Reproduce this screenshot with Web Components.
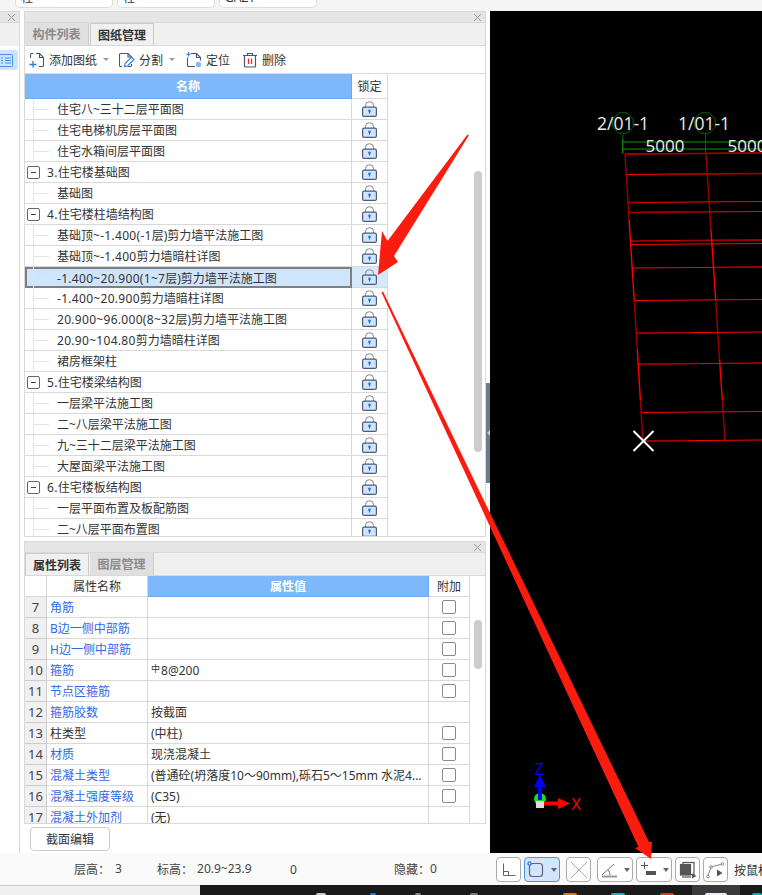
<!DOCTYPE html>
<html lang="zh">
<head>
<meta charset="utf-8">
<title>图纸管理</title>
<style>
  html, body { margin: 0; padding: 0; background: #fff; }
  body { font: 12px "Noto Sans", "Noto Sans CJK SC", sans-serif; color: #333; }
</style>
</head>
<body>
<app-shell>
  <top-strip slot="top"></top-strip>
  <side-strip slot="side"></side-strip>

  <dock-panel slot="sheets" tabs="构件列表,图纸管理" active="1">
    <sheet-toolbar>
      <tool-btn label="添加图纸" caret>
        <svg width="16" height="16" viewBox="0 0 16 16" fill="none" stroke="#4b5568" stroke-width="1.1">
          <path d="M1.5 6V2.500a1 1 0 0 1 1-1h2M7 1.500h3.500l4 4v8a1 1 0 0 1-1 1H10M14.500 9v2"/>
          <path d="M10.500 1.500v4h4"/>
          <path d="M4 9v6.500M.5 12.500h7" stroke="#2c7be5" stroke-width="1.300"/>
        </svg>
      </tool-btn>
      <tool-btn label="分割" caret gap="10">
        <svg width="16" height="16" viewBox="0 0 16 16" fill="none" stroke="#4b5568" stroke-width="1.1">
          <path d="M3 14.500H1.500a1 1 0 0 1-1-1V2.500a1 1 0 0 1 1-1H9l3.500 3.500v1.500M12.500 12v1.500a1 1 0 0 1-1 1H9"/>
          <path d="M9 1.500V5h3.500"/>
          <path d="M5.500 14.500l.6-3L12.500 5l2.500 2.500-6.500 6.500z" fill="#fff" stroke="#2c7be5"/>
        </svg>
      </tool-btn>
      <tool-btn label="定位" gap="11">
        <svg width="16" height="16" viewBox="0 0 16 16" fill="none" stroke="#4b5568" stroke-width="1.1">
          <path d="M5 1.500h5.500l4 4v3M10.500 1.500v4h4M1.500 5.500v8a1 1 0 0 0 1 1H9"/>
          <path d="M2.500 0v4.500M.3 2.200h4.500" stroke="#2c7be5"/>
          <rect x="10" y="10" width="5" height="5" rx="1.500" fill="#8db8ee" stroke="none"/>
        </svg>
      </tool-btn>
      <tool-btn label="删除" gap="12">
        <svg width="16" height="16" viewBox="0 0 16 16" fill="none" stroke="#4b5568" stroke-width="1.2">
          <path d="M1 3.500h14M5.500 3.500V1.500h5v2"/>
          <path d="M2.500 3.500v10.500a1 1 0 0 0 1 1h9a1 1 0 0 0 1-1V3.500"/>
          <path d="M6.500 6.500v5.500M9.500 6.500v5.500" stroke="#e02b2b" stroke-width="1.300"/>
        </svg>
      </tool-btn>
    </sheet-toolbar>
    <drawing-list></drawing-list>
  </dock-panel>

  <dock-panel slot="props" tabs="属性列表,图层管理" active="0">
    <prop-table></prop-table>
  </dock-panel>

  <edit-button slot="action">截面编辑</edit-button>

  <cad-canvas slot="canvas"></cad-canvas>

  <status-bar slot="status">
    <snap-btn>
      <svg width="23" height="23" viewBox="0 0 23 23" fill="none" stroke="#666">
        <path d="M6.500 5.500v12h12M6.500 13.500h5v4"/>
      </svg>
    </snap-btn>
    <snap-btn wide selected>
      <svg width="23" height="23" viewBox="0 0 23 23" fill="none" stroke="#5a6478" stroke-width="1.200">
        <rect x="4.500" y="5.500" width="13" height="13" rx="3"/>
        <circle cx="4.500" cy="5.500" r="1.600" fill="#d3e5fb" stroke="#2c7be5"/>
      </svg>
    </snap-btn>
    <snap-btn gap="3">
      <svg width="23" height="23" viewBox="0 0 23 23" fill="none" stroke="#aaa">
        <path d="M4 4l16 16M20 4L4 20"/>
      </svg>
    </snap-btn>
    <snap-btn wide gap="3">
      <svg width="23" height="23" viewBox="0 0 23 23" fill="none" stroke="#777">
        <path d="M4 17l12-11"/>
        <path d="M4 18.500h15" stroke="#999" stroke-width="2"/>
        <path d="M10 12q2 2 2 5"/>
      </svg>
    </snap-btn>
    <snap-btn wide>
      <svg width="23" height="23" viewBox="0 0 23 23" fill="none" stroke="#555">
        <path d="M7.500 4v7M4 7.500h7"/>
        <rect x="9" y="13" width="10" height="4" fill="#555" stroke="none"/>
      </svg>
    </snap-btn>
    <snap-btn>
      <svg width="23" height="23" viewBox="0 0 23 23" fill="none" stroke="#555" stroke-width="1.200">
        <rect x="7" y="4.500" width="11" height="12"/>
        <rect x="4.500" y="6.500" width="10" height="10.500" fill="#555"/>
        <path d="M6 19h9"/>
        <path d="M16 15.500l4.500 2.500-4.500 2.500z" fill="#555" stroke="none"/>
      </svg>
    </snap-btn>
    <snap-btn>
      <svg width="23" height="23" viewBox="0 0 23 23" fill="none" stroke="#888">
        <path d="M4 18l3-9 11-3"/>
        <circle cx="4" cy="18.500" r="1.300" fill="#fff"/>
        <circle cx="7" cy="9" r="1.300" fill="#fff"/>
        <circle cx="18.500" cy="6" r="1.300" fill="#fff"/>
        <path d="M13 11.500l5.500 3.500-5.500 3.500z" fill="#555" stroke="none"/>
      </svg>
    </snap-btn>
  </status-bar>

  <task-bar slot="task"></task-bar>
  <arrow-overlay slot="overlay"></arrow-overlay>
</app-shell>

<script>
const FONT = `"Noto Sans", "Noto Sans CJK SC", sans-serif`;
const LINE = "#d9d9d9";

// 数字部分稍微放宽一点，原图是 hinting 后的字宽
const spaced = (text) => text.replace(/[-0-9.~()]{2,}/g, (m) => `<span class="n">${m}</span>`);

class AppShell extends HTMLElement {
  constructor() {
    super();
    this.attachShadow({ mode: "open" });
    this.shadowRoot.innerHTML = `
      <style>
        :host { display: flex; flex-direction: column; position: relative; width: 762px; height: 895px; overflow: hidden; font: 12px ${FONT}; color: #333; background: #fff; }
        .middle { display: flex; height: 842px; }
        .docks { display: flex; flex-direction: column; width: 462px; margin-left: 4px; }
        .gap { height: 4px; flex: none; }
        .split { width: 4px; flex: none; display: flex; align-items: flex-start; }
        .handle { width: 4px; height: 100px; margin-top: 372px; background: #6c7a89; display: flex; align-items: center; justify-content: center; }
        .handle i { width: 0; height: 0; border: 3px solid transparent; border-right: 3px solid #c9c9c9; border-left: 0; }
        .canvas { flex: 1; min-width: 0; }
        ::slotted([slot="sheets"]) { height: 526px; flex: none; }
        ::slotted([slot="props"]) { height: 283px; flex: none; }
      </style>
      <slot name="top"></slot>
      <div class="middle">
        <slot name="side"></slot>
        <div class="docks">
          <slot name="sheets"></slot>
          <div class="gap"></div>
          <slot name="props"></slot>
          <slot name="action"></slot>
        </div>
        <div class="split"><div class="handle"><i></i></div></div>
        <div class="canvas"><slot name="canvas"></slot></div>
      </div>
      <slot name="status"></slot>
      <slot name="task"></slot>
      <slot name="overlay"></slot>
    `;
  }
}

class TopStrip extends HTMLElement {
  constructor() {
    super();
    this.attachShadow({ mode: "open" });
    this.shadowRoot.innerHTML = `
      <style>
        :host { display: flex; height: 11px; flex: none; background: #f5f5f5; padding-left: 15px; gap: 4px; box-sizing: border-box; }
        .box { width: 98px; height: 8px; background: #fff; border: 1px solid #ddd; border-top: 0; border-radius: 0 0 5px 5px; overflow: hidden; padding-left: 5px; box-sizing: border-box; }
        .box span { display: block; margin-top: -10px; line-height: 16px; color: #333; }
      </style>
      <div class="box"><span>柱</span></div>
      <div class="box"><span>柱</span></div>
      <div class="box"><span>GAZ1</span></div>
    `;
  }
}

class SideStrip extends HTMLElement {
  constructor() {
    super();
    this.attachShadow({ mode: "open" });
    this.shadowRoot.innerHTML = `
      <style>
        :host { display: block; width: 20px; flex: none; box-sizing: border-box; border-top: 1px solid ${LINE}; border-right: 1px solid ${LINE}; background: #fff; }
        .title { height: 10px; background: #e5e5e5; border-bottom: 1px solid ${LINE}; display: flex; justify-content: flex-end; align-items: center; padding-right: 4px; }
        .band { height: 23px; background: #f0f0f0; }
        .pick { width: 18px; height: 20px; margin-top: 4px; background: #cde3fb; border-radius: 0 3px 3px 0; display: flex; align-items: center; }
      </style>
      <div class="title">
        <svg width="7" height="7" viewBox="0 0 7 7" stroke="#999" fill="none"><path d="M0 0l7 7M7 0L0 7"/></svg>
      </div>
      <div class="band"></div>
      <div class="pick">
        <svg width="13" height="13" viewBox="0 0 13 13" fill="none" stroke="#4a90e8">
          <path d="M-1 .5h12.500a1 1 0 0 1 1 1v10a1 1 0 0 1-1 1H-1"/>
          <path d="M1 4h2M5 4h6M1 6.500h2M5 6.500h6M1 9h2M5 9h6"/>
        </svg>
      </div>
    `;
  }
}

class DockPanel extends HTMLElement {
  constructor() {
    super();
    this.attachShadow({ mode: "open" });
  }

  connectedCallback() {
    const names = (this.getAttribute("tabs") || "").split(",");
    const active = Number(this.getAttribute("active") || 0);
    this.shadowRoot.innerHTML = `
      <style>
        :host { display: flex; flex-direction: column; box-sizing: border-box; border: 1px solid ${LINE}; overflow: hidden; background: #fff; }
        .title { flex: none; height: 10px; background: #e5e5e5; border-bottom: 1px solid ${LINE}; display: flex; justify-content: flex-end; align-items: center; padding-right: 4px; }
        .tabs { flex: none; height: 22px; background: #f0f0f0; border-bottom: 1px solid ${LINE}; display: flex; gap: 1px; }
        .tab { width: 64px; box-sizing: border-box; display: flex; align-items: center; justify-content: center; font-weight: 700; color: #8a8a8a; background: #e0e0e0; border-right: 1px solid #ccc; }
        .tab.on { color: #333; background: #f0f0f0; border: 1px solid #ccc; border-bottom: 0; }
      </style>
      <div class="title">
        <svg width="7" height="7" viewBox="0 0 7 7" stroke="#999" fill="none"><path d="M0 0l7 7M7 0L0 7"/></svg>
      </div>
      <div class="tabs">
        ${names.map((name, i) => `<div class="tab ${i === active ? "on" : ""}">${name}</div>`).join("")}
      </div>
      <slot></slot>
    `;
  }
}

class SheetToolbar extends HTMLElement {
  constructor() {
    super();
    this.attachShadow({ mode: "open" });
    this.shadowRoot.innerHTML = `
      <style>
        :host { display: flex; flex: none; height: 27px; align-items: center; padding-left: 4px; border-bottom: 1px solid ${LINE}; background: #fff; }
      </style>
      <slot></slot>
    `;
  }
}

class ToolBtn extends HTMLElement {
  constructor() {
    super();
    this.attachShadow({ mode: "open" });
  }

  connectedCallback() {
    const label = this.getAttribute("label");
    const gap = this.getAttribute("gap") || 0;
    this.shadowRoot.innerHTML = `
      <style>
        :host { display: flex; align-items: center; gap: 4px; margin-left: ${gap}px; color: #333; }
        .caret { width: 0; height: 0; margin-left: 2px; border: 3px solid transparent; border-top: 3px solid #999; border-bottom: 0; }
        ::slotted(svg) { display: block; }
      </style>
      <slot></slot><span>${label}</span>
      ${this.hasAttribute("caret") ? `<i class="caret"></i>` : ""}
    `;
  }
}

class LockIcon extends HTMLElement {
  constructor() {
    super();
    this.attachShadow({ mode: "open" });
    this.shadowRoot.innerHTML = `
      <style>:host { display: block; width: 15px; height: 16px; } svg { display: block; }</style>
      <svg width="15" height="16" viewBox="0 0 15 16" fill="none">
        <path d="M3.500 6.500V4.500a4 3.800 0 0 1 8 0v2" stroke="#7b8494"/>
        <rect x=".6" y="6.100" width="13.800" height="9.300" rx="1.500" fill="#cfe4fd" stroke="#4f5b73" stroke-width="1.200"/>
        <path d="M7.500 10v2.500" stroke="#1a73e8" stroke-width="1.200"/>
        <circle cx="7.500" cy="9.800" r="1.300" fill="#1a73e8"/>
      </svg>
    `;
  }
}

class DrawingList extends HTMLElement {
  constructor() {
    super();
    this.attachShadow({ mode: "open" });
    this.rows = [
      ["住宅八~三十二层平面图"], ["住宅电梯机房层平面图"], ["住宅水箱间层平面图"],
      ["3.住宅楼基础图", "group"], ["基础图"],
      ["4.住宅楼柱墙结构图", "group"], ["基础顶~-1.400(-1层)剪力墙平法施工图"], ["基础顶~-1.400剪力墙暗柱详图"],
      ["-1.400~20.900(1~7层)剪力墙平法施工图", "selected"], ["-1.400~20.900剪力墙暗柱详图"],
      ["20.900~96.000(8~32层)剪力墙平法施工图"], ["20.90~104.80剪力墙暗柱详图"], ["裙房框架柱"],
      ["5.住宅楼梁结构图", "group"], ["一层梁平法施工图"], ["二~八层梁平法施工图"], ["九~三十二层梁平法施工图"], ["大屋面梁平法施工图"],
      ["6.住宅楼板结构图", "group"], ["一层平面布置及板配筋图"], ["二~八层平面布置图"],
    ];
  }

  connectedCallback() {
    this.shadowRoot.innerHTML = `
      <style>
        :host { display: flex; flex: 1; min-height: 0; overflow: hidden; background: #fff; }
        .table { width: 363px; flex: none; }
        .head, .row { display: grid; grid-template-columns: 327px 36px; }
        .head div { height: 24px; display: flex; align-items: center; justify-content: center; border-bottom: 1px solid ${LINE}; border-right: 1px solid ${LINE}; }
        .head .name { background: #7cb8fa; color: #fff; font-weight: 700; border-color: #6aa9ee; }
        .row > div { height: 20px; border-bottom: 1px solid ${LINE}; border-right: 1px solid ${LINE}; display: flex; align-items: center; white-space: nowrap; }
        .lock { justify-content: center; }
        .tree { align-self: stretch; width: 15px; margin-left: 8px; margin-right: 8px; border-left: 1px solid #e4e4e4; display: flex; align-items: center; margin-bottom: -1px; }
        .tree i { display: block; width: 15px; height: 1px; background: #e4e4e4; }
        .minus { width: 11px; height: 11px; margin: 0 7px 0 2px; border: 1px solid #666; border-radius: 2px; display: flex; align-items: center; justify-content: center; }
        .minus i { display: block; width: 5px; height: 1px; background: #444; }
        .row.selected .name { height: 21px; box-sizing: border-box; border: 0; background: #cfe5fd; box-shadow: inset 0 0 0 2px #7f7f7f; }
        .row.selected .lock { background: #d5e8fd; }
        .n { letter-spacing: .3px; }
        .track { flex: 1; display: flex; justify-content: flex-end; padding-right: 3px; }
        .thumb { width: 8px; height: 281px; margin-top: 97px; background: #ccc; border-radius: 4px; }
      </style>
      <div class="table">
        <div class="head"><div class="name">名称</div><div>锁定</div></div>
        ${this.rows.map(([text, kind]) => `
          <div class="row ${kind || ""}">
            <div class="name">
              ${kind === "group" ? `<span class="minus"><i></i></span>` : `<span class="tree"><i></i></span>`}
              <span>${spaced(text)}</span>
            </div>
            <div class="lock"><lock-icon></lock-icon></div>
          </div>`).join("")}
      </div>
      <div class="track"><div class="thumb"></div></div>
    `;
  }
}

class PropTable extends HTMLElement {
  constructor() {
    super();
    this.attachShadow({ mode: "open" });
    // [序号, 名称, 值, 名称蓝色, 有勾选框]
    this.rows = [
      [7, "角筋", "", 1, 1],
      [8, "B边一侧中部筋", "", 1, 1],
      [9, "H边一侧中部筋", "", 1, 1],
      [10, "箍筋", `<span class="steel">中</span>8@200`, 1, 1],
      [11, "节点区箍筋", "", 1, 1],
      [12, "箍筋胶数", "按截面", 1, 0],
      [13, "柱类型", "(中柱)", 0, 1],
      [14, "材质", "现浇混凝土", 1, 1],
      [15, "混凝土类型", "(普通砼(坍落度10～90mm),砾石5～15mm 水泥4...", 1, 1],
      [16, "混凝土强度等级", "(C35)", 1, 1],
      [17, "混凝土外加剂", "(无)", 1, 0],
    ];
  }

  connectedCallback() {
    this.shadowRoot.innerHTML = `
      <style>
        :host { display: flex; flex: 1; min-height: 0; overflow: hidden; background: #fff; }
        .table { width: 445px; flex: none; }
        .row { display: grid; grid-template-columns: 22px 101px 281px 41px; }
        .row > div { height: 20px; border-bottom: 1px solid ${LINE}; border-right: 1px solid ${LINE}; display: flex; align-items: center; white-space: nowrap; overflow: hidden; }
        .no { justify-content: center; background: #f0f0f0; font-size: 13px; color: #444; border-color: #ccc !important; }
        .label { padding-left: 3px; }
        .label.blue { color: #3068e8; }
        .val { padding-left: 3px; color: #333; }
        .steel { font-size: 9px; position: relative; top: -2px; margin-right: 1px; }
        .add { justify-content: center; }
        .head > div { justify-content: center; padding: 0; }
        .head .val { background: #7cb8fa; color: #fff; font-weight: 700; border-color: #6aa9ee; }
        .box { width: 12px; height: 12px; border: 1px solid #8a8a8a; border-radius: 2px; background: #fff; }
        .track { flex: 1; display: flex; justify-content: flex-end; padding-right: 3px; }
        .thumb { width: 8px; height: 49px; margin-top: 44px; background: #ccc; border-radius: 4px; }
      </style>
      <div class="table">
        <div class="row head">
          <div></div><div>属性名称</div><div class="val">属性值</div><div>附加</div>
        </div>
        ${this.rows.map(([no, label, value, blue, check]) => `
          <div class="row">
            <div class="no">${no}</div>
            <div class="label ${blue ? "blue" : ""}">${label}</div>
            <div class="val">${value}</div>
            <div class="add">${check ? `<span class="box"></span>` : ""}</div>
          </div>`).join("")}
      </div>
      <div class="track"><div class="thumb"></div></div>
    `;
  }
}

class EditButton extends HTMLElement {
  constructor() {
    super();
    this.attachShadow({ mode: "open" });
    this.shadowRoot.innerHTML = `
      <style>
        :host { display: flex; width: 80px; height: 24px; margin: 3px 0 0 6px; box-sizing: border-box; border: 1px solid #ccc; border-radius: 4px; align-items: center; justify-content: center; color: #333; background: #fff; }
      </style>
      <slot></slot>
    `;
  }
}

class CadCanvas extends HTMLElement {
  constructor() {
    super();
    this.attachShadow({ mode: "open" });
  }

  connectedCallback() {
    const left = (y) => 625 + ((y - 154) * 18) / 287;
    const right = (y) => 706 + ((y - 154) * 19) / 287;
    const BRIGHT = "#ff0000";
    const DARK = "#a00000";

    // [y, 深色起点, 深色终点]
    const rails = [
      [154, 625, 762], [174.5, 665, 762], [202.5, 626, 640], [212.5, 628, 680],
      [241, 680, 762], [244.5, 630, 632], [268, 712, 762], [300.5, 634, 636],
      [333, 640, 690], [364, 650, 700], [412.5, 640, 642], [441, 646, 690],
    ];
    const rail = ([y, d0, d1]) => {
      const x0 = left(y);
      const end = y - 1;
      const at = (x) => (y + ((x - x0) * (end - y)) / (762 - x0)).toFixed(1);
      return `<path d="M${x0.toFixed(1)} ${y}L762 ${end}" stroke="${BRIGHT}" stroke-width="1.200"/>
        <path d="M${Math.max(d0, x0).toFixed(1)} ${at(Math.max(d0, x0))}L${d1} ${at(d1)}" stroke="${DARK}" stroke-width="1.500"/>`;
    };
    const post = (fx, spans) => spans.map(([y0, y1, c]) =>
      `<path d="M${fx(y0).toFixed(1)} ${y0}L${fx(y1).toFixed(1)} ${y1}" stroke="${c}" stroke-width="1.400"/>`).join("");
    const hex = (cx, cy, r) => {
      const pts = [];
      for (let i = 0; i < 8; i++) {
        const a = Math.PI / 8 + (i * Math.PI) / 4;
        pts.push(`${(cx + r * Math.cos(a)).toFixed(1)},${(cy + r * Math.sin(a)).toFixed(1)}`);
      }
      return `<polygon points="${pts.join(" ")}"/>`;
    };

    this.shadowRoot.innerHTML = `
      <style>
        :host { display: block; height: 100%; background: #000; }
        svg { display: block; }
        text { font-family: "Open Sans", sans-serif; }
      </style>
      <svg width="272" height="842" viewBox="490 11 272 842">
        <g fill="none" stroke="#086408">
          ${hex(623, 123, 11)}${hex(705, 123, 11)}
          <path d="M623 134v20M705.500 134v20"/>
          <path d="M622 142h140M622 149h140" stroke-width="1.300"/>
          <path d="M622.500 139v14" stroke="#0a800a"/>
        </g>
        <g fill="none">
          ${rails.map(rail).join("")}
          ${post(left, [[154, 220, DARK], [220, 300, BRIGHT], [300, 350, DARK], [350, 400, BRIGHT], [400, 441, DARK]])}
          ${post(right, [[154, 230, DARK], [230, 300, BRIGHT], [300, 360, DARK], [360, 400, BRIGHT], [400, 441, DARK]])}
        </g>
        <g fill="#ececec" font-size="17.500">
          <text x="597" y="130">2/01-1</text>
          <text x="678" y="130">1/01-1</text>
          <text x="645.500" y="151.500" font-size="17">5000</text>
          <text x="727.500" y="151.500" font-size="17">5000</text>
        </g>
        <path d="M633.500 431l20 20M653.500 431l-20 20" stroke="#fff" stroke-width="2" fill="none"/>
        <circle cx="540" cy="799" r="6" fill="#19e019"/>
        <path d="M538 800v-14h4v14z" fill="#0000ff"/>
        <path d="M540 775l-6 12h12z" fill="#0000ff"/>
        <path d="M544 801.500h14v4h-14z" fill="#ff0000"/>
        <path d="M570 803.500l-12-5.500v11z" fill="#ff0000"/>
        <rect x="536" y="801" width="8" height="7" fill="#dcdcdc"/>
        <text x="534.500" y="775" font-size="16" fill="#0000ff">Z</text>
        <text x="571.500" y="810" font-size="16" fill="#ff0000">X</text>
      </svg>
    `;
  }
}

class StatusBar extends HTMLElement {
  constructor() {
    super();
    this.attachShadow({ mode: "open" });
    this.shadowRoot.innerHTML = `
      <style>
        :host { display: flex; flex: none; height: 32px; background: #fafafa; align-items: center; overflow: hidden; color: #444; }
        .info { width: 496px; flex: none; box-sizing: border-box; padding-left: 74px; display: flex; align-items: center; }
        .f { display: flex; flex: none; }
        .snap { display: flex; gap: 3px; align-items: center; flex: none; margin-top: 1px; }
        .hint { margin-left: 3px; white-space: nowrap; color: #333; }
      </style>
      <div class="info">
        <div class="f" style="width:83px"><span>层高：</span><span style="margin-left:5px">3</span></div>
        <div class="f" style="width:133px"><span>标高：</span><span style="margin-left:4px">20.9~23.9</span></div>
        <div class="f" style="width:104px"><span>0</span></div>
        <div class="f"><span>隐藏：</span><span>0</span></div>
      </div>
      <div class="snap"><slot></slot><span class="hint">按鼠标左键指定</span></div>
    `;
  }
}

class SnapBtn extends HTMLElement {
  constructor() {
    super();
    this.attachShadow({ mode: "open" });
  }

  connectedCallback() {
    const wide = this.hasAttribute("wide");
    const selected = this.hasAttribute("selected");
    const gap = this.getAttribute("gap") || 0;
    this.shadowRoot.innerHTML = `
      <style>
        :host { display: flex; align-items: center; flex: none; box-sizing: border-box; height: 25px; margin-left: ${gap}px; width: ${wide ? 36 : 25}px; border: 1px solid ${selected ? "#4d94e8" : "#aaa"}; border-radius: 4px; background: ${selected ? "#d3e5fb" : "#fff"}; }
        ::slotted(svg) { display: block; flex: none; }
        .caret { width: 0; height: 0; margin-left: 3px; border: 3px solid transparent; border-top: 4px solid #666; border-bottom: 0; }
      </style>
      <slot></slot>
      ${wide ? `<i class="caret"></i>` : ""}
    `;
  }
}

class TaskBar extends HTMLElement {
  constructor() {
    super();
    this.attachShadow({ mode: "open" });
    // [起点 x, 宽度, 颜色]
    const blips = [
      [316, 10, "#c8c8c8"], [370, 6, "#2c7be5"], [415, 6, "#8a8a8a"], [470, 8, "#7a7a7a"],
      [563, 14, "#e8711c"], [611, 14, "#19b5b5"], [660, 14, "#d8392b"],
    ];
    let x = 200;
    const items = blips.map(([start, width, color]) => {
      const html = `<i style="margin-left:${start - x}px;width:${width}px;background:${color}"></i>`;
      x = start + width;
      return html;
    }).join("");
    this.shadowRoot.innerHTML = `
      <style>
        :host { display: flex; flex: none; height: 10px; }
        .rest { width: 200px; flex: none; box-sizing: border-box; background: #f0f0f0; border-top: 1px solid #ccc; }
        .dark { flex: 1; display: flex; align-items: flex-end; background: #1a1a1a; }
        i { display: block; height: 2px; border-radius: 4px 4px 0 0; flex: none; }
        .on { height: 10px; width: 48px; margin-left: ${692 - x}px; flex: none; background: #3a3a3a; display: flex; align-items: flex-end; justify-content: center; }
        .on i { width: 22px; background: #e8eef5; }
      </style>
      <div class="rest"></div>
      <div class="dark">
        ${items}
        <div class="on"><i></i></div>
        <i style="margin-left:12px;width:10px;background:#19a5a5"></i>
      </div>
    `;
  }
}

class ArrowOverlay extends HTMLElement {
  constructor() {
    super();
    this.attachShadow({ mode: "open" });
    this.shadowRoot.innerHTML = `
      <style>
        :host { display: block; position: absolute; left: 0; top: 0; width: 762px; height: 895px; pointer-events: none; }
        svg { display: block; }
      </style>
      <svg width="762" height="895" viewBox="0 0 762 895">
        <g fill="#fb1c10">
          <polygon points="467.500,134.500 468.800,135.500 394,256 398,262 378,275 382,231 387.500,241"/>
          <polygon points="381.500,292.500 383,291.500 649,842 652,842 651,859 635,848 638.500,847"/>
        </g>
      </svg>
    `;
  }
}

customElements.define("app-shell", AppShell);
customElements.define("top-strip", TopStrip);
customElements.define("side-strip", SideStrip);
customElements.define("dock-panel", DockPanel);
customElements.define("sheet-toolbar", SheetToolbar);
customElements.define("tool-btn", ToolBtn);
customElements.define("lock-icon", LockIcon);
customElements.define("drawing-list", DrawingList);
customElements.define("prop-table", PropTable);
customElements.define("edit-button", EditButton);
customElements.define("cad-canvas", CadCanvas);
customElements.define("status-bar", StatusBar);
customElements.define("snap-btn", SnapBtn);
customElements.define("task-bar", TaskBar);
customElements.define("arrow-overlay", ArrowOverlay);
</script>
</body>
</html>
